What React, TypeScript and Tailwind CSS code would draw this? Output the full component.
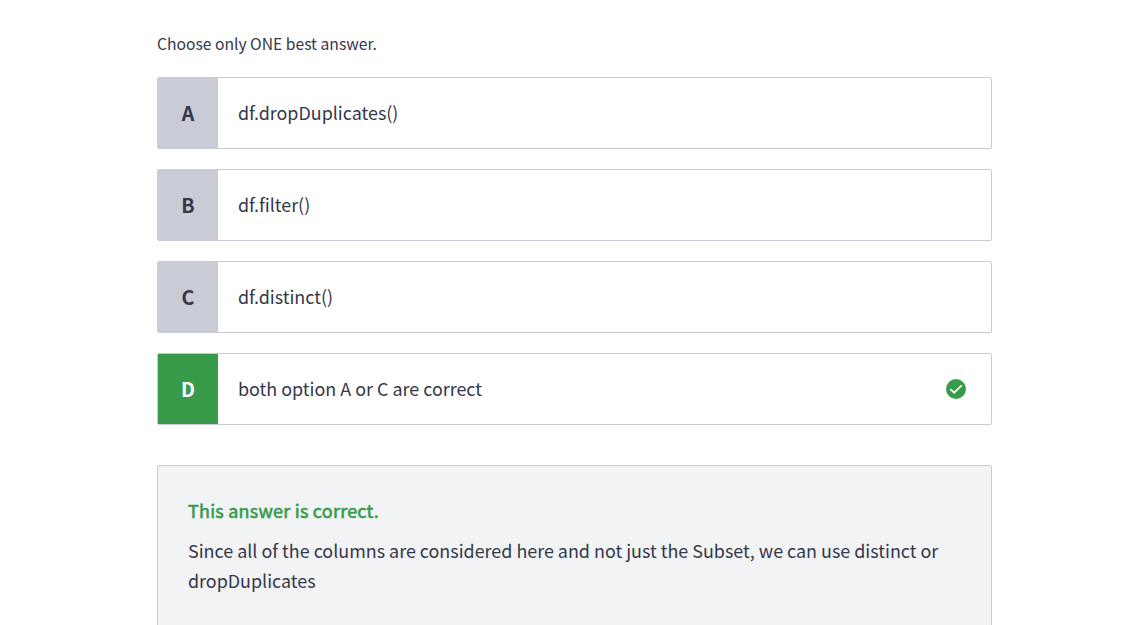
const options = [
  { letter: "A", text: "df.dropDuplicates()" },
  { letter: "B", text: "df.filter()" },
  { letter: "C", text: "df.distinct()" },
  { letter: "D", text: "both option A or C are correct", correct: true },
];

function CheckBadge() {
  return (
    <svg className="mr-[25px] size-5 shrink-0" viewBox="0 0 20 20" fill="none">
      <circle cx="10" cy="10" r="10" fill="#379b49" />
      <path d="M4.4 10.1 8.1 13.7 15.7 6.3" stroke="white" strokeWidth="1.8" />
    </svg>
  );
}

export default function App() {
  return (
    <main className="h-[625px] overflow-hidden bg-white pr-[133px] pl-[157px] font-['Noto_Sans_CJK_SC',sans-serif] text-[#35374a]">
      <p className="pt-8 text-[15.67px] leading-6">Choose only ONE best answer.</p>
      <ul className="mt-[21px] flex flex-col gap-5">
        {options.map((o) => (
          <li key={o.letter} className="flex h-[72px] items-center rounded-xs border border-[#c9cbd6] text-[17.91px]">
            <span
              className={
                o.correct
                  ? "flex h-full w-[60px] items-center justify-center bg-[#379b49] text-[19.6px] font-bold text-white"
                  : "flex h-full w-[60px] items-center justify-center bg-[#c9cbd6] text-[19.6px] font-bold"
              }
            >
              {o.letter}
            </span>
            <span className="ml-5 flex-1 pb-0.5 leading-[30px]">{o.text}</span>
            {o.correct && <CheckBadge />}
          </li>
        ))}
      </ul>
      <section className="mt-10 h-[200px] rounded-xs border border-[#c9cbd6] bg-[#f1f3f5] px-[30px] pt-[29px] text-[17.91px] leading-[30px]">
        <h2 className="tracking-[0.27px] text-[#379b49] [-webkit-text-stroke:0.6px]">This answer is correct.</h2>
        <p className="mt-[10px]">
          Since all of the columns are considered here and not just the Subset, we can use distinct or dropDuplicates
        </p>
      </section>
    </main>
  );
}
